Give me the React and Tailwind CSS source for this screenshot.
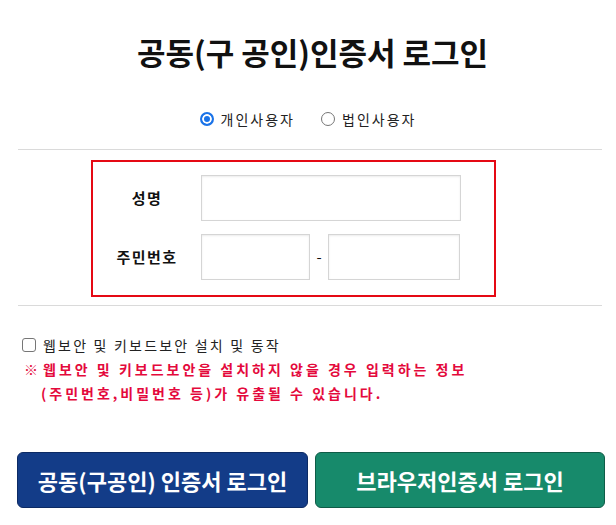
export default function App() {
  const font = { fontFamily: '"Noto Sans CJK KR", "Noto Sans", sans-serif' };
  return (
    <div className="w-[616px] h-[525px] overflow-hidden bg-white text-[#111]" style={font}>
      <h1 className="pt-[32px] pl-[9px] text-center text-[31px] leading-[40px] font-bold">
        공동(구 공인)인증서 로그인
      </h1>

      <div className="mt-[37px] flex justify-center items-center h-[20px] text-[14px] text-[#222]">
        <label className="flex items-center">
          <input
            type="radio"
            name="type"
            defaultChecked
            className="appearance-none w-[14px] h-[14px] m-0 rounded-full border border-[#767676] bg-white checked:border-2 checked:border-[#1a73e8] checked:bg-[#1a73e8] checked:shadow-[inset_0_0_0_2px_white]"
          />
          <span className="ml-[7px] tracking-[2px]">개인사용자</span>
        </label>
        <label className="flex items-center ml-[26px]">
          <input
            type="radio"
            name="type"
            className="appearance-none w-[14px] h-[14px] m-0 rounded-full border border-[#767676] bg-white checked:border-2 checked:border-[#1a73e8] checked:bg-[#1a73e8] checked:shadow-[inset_0_0_0_2px_white]"
          />
          <span className="ml-[7px] tracking-[2px]">법인사용자</span>
        </label>
      </div>

      <div className="mt-[20px] ml-[18px] w-[584px] h-px bg-[#dadada]"></div>

      <div className="mt-[10px] ml-[91px] w-[405px] h-[137px] border-2 border-[#e50914] pt-[13px]">
        <div className="flex items-center">
          <div className="w-[108px] text-center text-[15px] font-bold tracking-[1.5px]">성명</div>
          <input className="w-[260px] h-[46px] border border-[#d5d5d5] shadow-[inset_0_1px_2px_rgba(0,0,0,0.08)] outline-none" />
        </div>
        <div className="flex items-center mt-[13px]">
          <div className="w-[108px] text-center text-[15px] font-bold tracking-[1.5px]">주민번호</div>
          <input className="w-[109px] h-[46px] border border-[#d5d5d5] shadow-[inset_0_1px_2px_rgba(0,0,0,0.08)] outline-none" />
          <span className="w-[18px] text-center text-[15px]">-</span>
          <input className="w-[132px] h-[46px] border border-[#d5d5d5] shadow-[inset_0_1px_2px_rgba(0,0,0,0.08)] outline-none" />
        </div>
      </div>

      <div className="mt-[8px] ml-[18px] w-[584px] h-px bg-[#dadada]"></div>

      <label className="mt-[29px] ml-[22px] flex items-center h-[20px] text-[14px] text-[#222]">
        <input
          type="checkbox"
          className="appearance-none w-[14px] h-[14px] m-0 rounded-[3px] border border-[#767676] bg-white"
        />
        <span className="ml-[7px] tracking-[2.2px]">웹보안 및 키보드보안 설치 및 동작</span>
      </label>

      <div className="mt-[2px] ml-[24px] flex text-[14px] leading-[24px] font-bold text-[#e4093c] tracking-[3px]">
        <span className="w-[19px]">※</span>
        <p>
          웹보안 및 키보드보안을 설치하지 않을 경우 입력하는 정보
          <br />
          <span className="-ml-[2px]">(주민번호,비밀번호 등)가 유출될 수 있습니다.</span>
        </p>
      </div>

      <div className="mt-[47px] ml-[17px] flex gap-[7px]">
        <button className="w-[291px] h-[56px] rounded-[6px] bg-[#133c88] border border-[#0c2a64] text-white text-[22px] font-bold">
          공동(구공인) 인증서 로그인
        </button>
        <button className="w-[290px] h-[56px] rounded-[6px] bg-[#178a6b] border border-[#0f5c47] text-white text-[22px] font-bold">
          브라우저인증서 로그인
        </button>
      </div>
    </div>
  );
}
